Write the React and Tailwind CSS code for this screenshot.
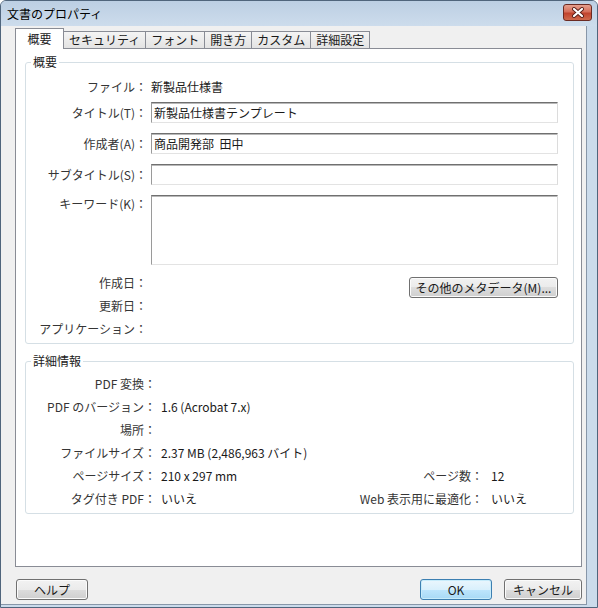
import React from "react";

// Vista-style document properties dialog

const btn =
  "h-[21px] rounded-[3px] border border-[#707070] bg-[linear-gradient(to_bottom,#f2f2f2_0%,#ebebeb_50%,#dddddd_50%,#cfcfcf_100%)] shadow-[inset_0_0_0_1px_#fbfbfb] text-[12px] leading-[16px] text-[#1a1a1a]";

const field =
  "h-[21px] w-full border border-t-[#707070] border-l-[#9a9a9a] border-r-[#dcdcdc] border-b-[#e3e3e3] shadow-[inset_0_1px_0_#b8b8b8] bg-white pl-[2px] text-[12px] text-[#1a1a1a] outline-none";

const tabs = ["セキュリティ", "フォント", "開き方", "カスタム", "詳細設定"];

function Row({ label, children }) {
  return (
    <div className="flex items-center h-[21px]">
      <div className="w-[121px] shrink-0 text-right text-[#353535] whitespace-nowrap">{label}</div>
      <div className="ml-[4px] flex-1">{children}</div>
    </div>
  );
}

function InfoRow({ label, value, rightLabel, rightValue }) {
  return (
    <div className="flex items-center h-[23px]">
      <div className="w-[130px] shrink-0 text-right text-[#353535] whitespace-nowrap">{label}</div>
      <div className="ml-[5px] flex-1 text-[#1a1a1a] whitespace-nowrap">{value}</div>
      {rightLabel && (
        <>
          <div className="text-right text-[#353535] whitespace-nowrap">{rightLabel}</div>
          <div className="w-[90px] pl-[8px] text-[#1a1a1a] whitespace-nowrap">{rightValue}</div>
        </>
      )}
    </div>
  );
}

export default function App() {
  return (
    <div className="w-[598px] h-[608px] flex flex-col bg-[#cbdbeb] border border-[#50657c] rounded-t-[6px] overflow-hidden font-['Noto_Sans_CJK_JP','Noto_Sans',sans-serif] text-[12px] leading-[16px]">
      {/* title bar */}
      <div className="h-[25px] shrink-0 flex items-center pl-[6px] pr-[5px] bg-[linear-gradient(to_bottom,#bccfe3,#cddcec)]">
        <span className="text-black text-[12px]">文書のプロパティ</span>
        <div className="ml-auto mb-[3px] w-[29px] h-[17px] rounded-[3px] border border-[#6b2a22] bg-[linear-gradient(to_bottom,#e6a08e_0%,#d56e5a_45%,#c1432d_55%,#cf6a4d_100%)] flex items-center justify-center">
          <svg width="14" height="11" viewBox="0 0 14 11">
            <path d="M3 2 L11 9 M11 2 L3 9" stroke="#5a2019" strokeWidth="4" strokeLinecap="round" />
            <path d="M3 2 L11 9 M11 2 L3 9" stroke="#ffffff" strokeWidth="2.2" strokeLinecap="round" />
          </svg>
        </div>
      </div>

      {/* body */}
      <div className="flex-1 mr-[10px] mb-[2px] bg-[#f0f0f0] border-r border-b border-[#8796a8] flex flex-col">
        {/* tabs */}
        <div className="mt-[2px] h-[20px] ml-[14px] flex items-end">
          <div className="relative z-10 -mb-[1px] h-[21px] w-[49px] bg-white border border-b-0 border-[#898c95] flex items-center justify-center text-[#1a1a1a]">
            概要
          </div>
          {tabs.map((t) => (
            <div
              key={t}
              className="h-[17px] -ml-[1px] px-[5px] border border-b-0 border-[#898c95] bg-[linear-gradient(to_bottom,#f4f4f4,#e3e3e3)] flex items-center text-[#1a1a1a] whitespace-nowrap"
            >
              {t}
            </div>
          ))}
        </div>

        {/* panel */}
        <div className="ml-[14px] mr-[4px] h-[519px] bg-white border border-[#898c95] pl-[9px] pr-[7px] pt-[5px]">
          <fieldset className="border border-[#d5dfe5] rounded-[3px] pb-[3px] pr-[15px]">
            <legend className="ml-[5px] px-[2px] leading-[16px] text-[#1a1a1a]">概要</legend>
            <div className="mt-[6px]">
              <Row label="ファイル：">
                <span className="text-[#1a1a1a]">新製品仕様書</span>
              </Row>
            </div>
            <div className="mt-[5px]">
              <Row label="タイトル(T)：">
                <input readOnly className={field} value="新製品仕様書テンプレート" />
              </Row>
            </div>
            <div className="mt-[10px]">
              <Row label="作成者(A)：">
                <input readOnly className={field} value="商品開発部  田中" />
              </Row>
            </div>
            <div className="mt-[10px]">
              <Row label="サブタイトル(S)：">
                <input readOnly className={field} value="" />
              </Row>
            </div>
            <div className="mt-[10px] flex">
              <div className="w-[121px] shrink-0 mt-[1px] text-right text-[#353535] whitespace-nowrap">キーワード(K)：</div>
              <textarea
                readOnly
                className="ml-[4px] flex-1 h-[70px] resize-none border border-t-[#707070] border-l-[#9a9a9a] border-r-[#dcdcdc] border-b-[#e3e3e3] shadow-[inset_0_1px_0_#b8b8b8] bg-white outline-none"
              />
            </div>
            <div className="mt-[6px] flex">
              <div className="w-[121px] shrink-0 text-right text-[#353535] whitespace-nowrap">
                <div className="h-[23px] flex items-center justify-end">作成日：</div>
                <div className="h-[23px] flex items-center justify-end">更新日：</div>
                <div className="h-[23px] flex items-center justify-end">アプリケーション：</div>
              </div>
              <div className="flex-1 flex justify-end items-start">
                <button className={btn + " mt-[6px] w-[149px]"}>その他のメタデータ(M)...</button>
              </div>
            </div>
          </fieldset>

          <fieldset className="mt-[9px] border border-[#d5dfe5] rounded-[3px] pt-[3px] pb-[3px]">
            <legend className="ml-[5px] px-[2px] leading-[16px] text-[#1a1a1a]">詳細情報</legend>
            <InfoRow label="PDF 変換：" value="" />
            <InfoRow label="PDF のバージョン：" value="1.6 (Acrobat 7.x)" />
            <InfoRow label="場所：" value="" />
            <InfoRow label="ファイルサイズ：" value="2.37 MB (2,486,963 バイト)" />
            <InfoRow label="ページサイズ：" value="210 x 297 mm" rightLabel="ページ数：" rightValue="12" />
            <InfoRow label="タグ付き PDF：" value="いいえ" rightLabel="Web 表示用に最適化：" rightValue="いいえ" />
          </fieldset>
        </div>

        {/* buttons */}
        <div className="mt-[12px] ml-[15px] mr-[4px] flex items-center">
          <button className={btn + " w-[72px]"}>ヘルプ</button>
          <button className="ml-auto h-[21px] w-[72px] rounded-[3px] border border-[#3c7fb1] bg-[linear-gradient(to_bottom,#eaf6fd_0%,#d9f0fc_50%,#bee6fd_50%,#a7d9f5_100%)] shadow-[inset_0_0_0_1px_#c7ecfb] text-[12px] leading-[16px] text-[#1a1a1a]">
            OK
          </button>
          <button className={btn + " ml-[12px] w-[78px]"}>キャンセル</button>
        </div>
      </div>
    </div>
  );
}
